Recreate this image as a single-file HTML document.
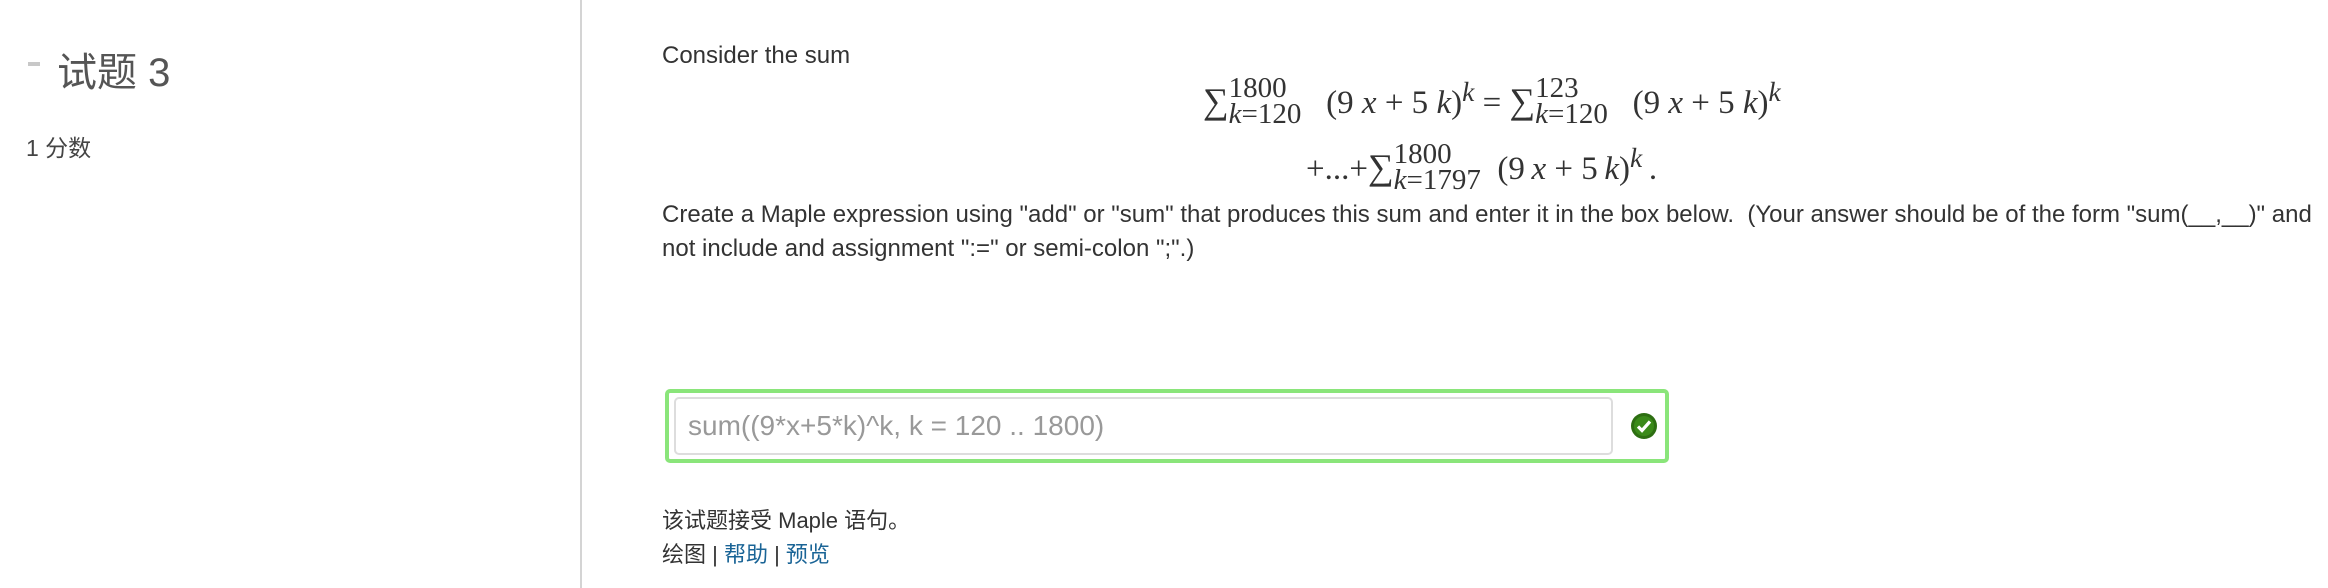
<!DOCTYPE html>
<html><head><meta charset="utf-8"><style>
body{margin:0;width:2328px;height:588px;background:#fff;position:relative;overflow:hidden;font-family:"Liberation Sans","Noto Sans CJK SC",sans-serif;color:#333}
.a{position:absolute;white-space:nowrap}
.m{font-family:"Liberation Serif",serif;font-size:33px;color:#333}
.m i{font-style:italic}
.ss{display:inline-block;vertical-align:middle;line-height:26px;font-size:29px;position:relative;top:-4px}
.sg{font-size:36px}
</style></head><body>
<div class="a" style="left:580px;top:0;width:2px;height:588px;background:#d4d4d4"></div>
<div class="a" style="left:28px;top:62px;width:12px;height:4px;background:#c8c8c8"></div>
<div class="a" style="left:57px;top:40px;font-size:40px;color:#555">试题 3</div>
<div class="a" style="left:26px;top:129px;font-size:23px;color:#444">1 分数</div>
<div class="a" style="left:662px;top:42px;font-size:24px">Consider the sum</div>
<div class="a m" style="left:1203px;top:76px"><span class="sg">∑</span><span class="ss">1800<br><i>k</i>=120</span>&nbsp;&nbsp;&nbsp;(9&nbsp;<i>x</i> + 5&nbsp;<i>k</i>)<sup><i>k</i></sup> = <span class="sg">∑</span><span class="ss">123<br><i>k</i>=120</span>&nbsp;&nbsp;&nbsp;(9&nbsp;<i>x</i> + 5&nbsp;<i>k</i>)<sup><i>k</i></sup></div>
<div class="a m" style="left:1306px;top:142px">+...+<span class="sg">∑</span><span class="ss">1800<br><i>k</i>=1797</span>&nbsp;&nbsp;(9&thinsp;<i>x</i> + 5&thinsp;<i>k</i>)<sup><i>k</i></sup>&thinsp;.</div>
<div class="a" style="left:662px;top:198px;font-size:24px;line-height:34px">Create a Maple expression using "add" or "sum" that produces this sum and enter it in the box below.&nbsp; (Your answer should be of the form "sum(__,__)" and<br>not include and assignment ":=" or semi-colon ";".)</div>
<div class="a" style="left:665px;top:389px;width:996px;height:66px;border:4px solid #8ae57a;border-radius:5px"></div>
<div class="a" style="left:674px;top:397px;width:935px;height:54px;border:2px solid #ddd;border-radius:5px;background:#fff"></div>
<div class="a" style="left:688px;top:410px;font-size:28px;color:#999">sum((9*x+5*k)^k, k = 120 .. 1800)</div>
<svg class="a" style="left:1630px;top:412px" width="28" height="28" viewBox="0 0 28 28"><circle cx="14" cy="14" r="13" fill="#2d6e12"/><circle cx="14" cy="14" r="10" fill="#3b8a1a"/><path d="M8 14.5l4 4 8-9" stroke="#fff" stroke-width="3.2" fill="none"/></svg>
<div class="a" style="left:662px;top:503px;font-size:22px">该试题接受 Maple 语句。</div>
<div class="a" style="left:662px;top:537px;font-size:22px">绘图 | <span style="color:#1a6496">帮助</span> | <span style="color:#1a6496">预览</span></div>
</body></html>
